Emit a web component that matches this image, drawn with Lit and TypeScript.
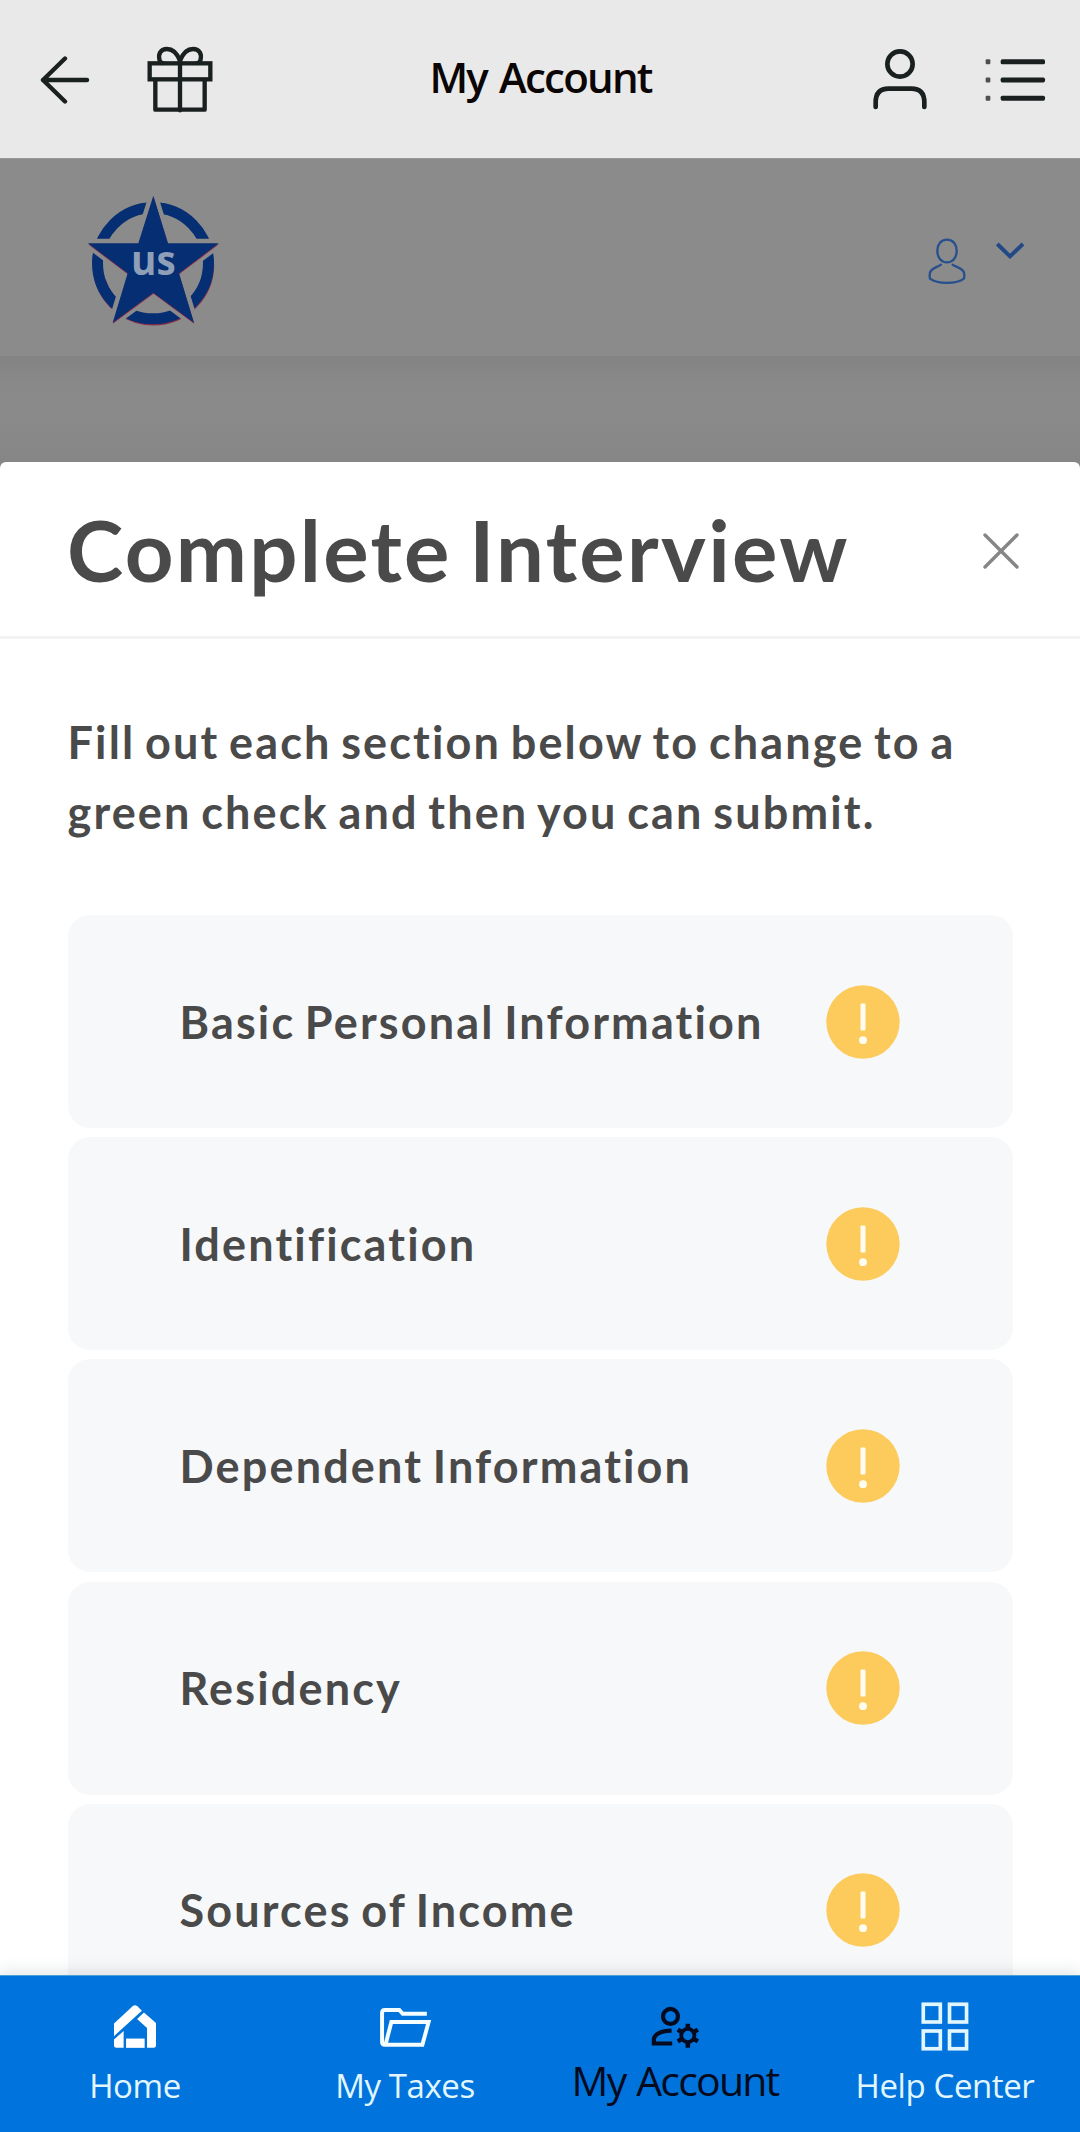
import { LitElement, html, css, svg } from "lit";
import { customElement } from "lit/decorators.js";

const sections = [
  "Basic Personal Information",
  "Identification",
  "Dependent Information",
  "Residency",
  "Sources of Income",
];

const STAR =
  "280,77 324,220 476,220 357,310 402,458 280,368 158,458 203,310 84,220 235,220";

const icons = {
  home: svg`<svg width="42" height="43" viewBox="331 134 122 124" fill="#fff">
    <path d="M331 187 L385 137 Q392 132 399 137 L412 150 L331 224 Z"/>
    <path d="M418 155 L453 186 V251 Q453 258 446 258 H427 V200 L398 174 Z"/>
    <path d="M331 234 L359 209 V258 H338 Q331 258 331 251 Z"/>
    <rect x="366" y="231" width="54" height="27"/>
  </svg>`,
  taxes: svg`<svg width="51" height="40" viewBox="1106 137 148 115" fill="none" stroke="#f4fdff" stroke-width="11.500">
    <path d="M1242 156 H1172 L1162 145 H1120 Q1112 145 1112 153 V238 Q1112 246 1120 246 H1229 L1247 180 H1139 L1122 246"/>
  </svg>`,
  account: svg`<svg width="48" height="42" viewBox="322 138 138 121" fill="none" stroke="#050a1e">
    <circle cx="378" cy="168" r="21.5" stroke-width="12"/>
    <path d="M381 209 C352 209 330 219 330 236 V246 H383" stroke-width="12"/>
    <circle cx="428" cy="223" r="19" stroke-width="11"/>
    <path d="M428 207 V189 M428 239 V258 M414 215 L399 206 M442 231 L457 240 M442 215 L457 206 M414 231 L399 240" stroke-width="13"/>
  </svg>`,
  help: svg`<svg width="48" height="49" viewBox="1107 125 138 141" fill="none" stroke="#e2f6ff" stroke-width="10.500">
    <rect x="1113.500" y="131.500" width="49" height="51"/><rect x="1189" y="131.500" width="49" height="51"/>
    <rect x="1113.500" y="208.500" width="49" height="51"/><rect x="1189" y="208.500" width="49" height="51"/>
  </svg>`,
};

@customElement("app-root")
export class AppRoot extends LitElement {
  static styles = css`
    :host {
      display: flex;
      flex-direction: column;
      width: 1080px;
      height: 2132px;
      overflow: hidden;
      background: #8a8a8a;
      color: #4a4a4a;
      font-family: "Lato", sans-serif;
    }
    svg { display: block; flex: none; }
    .topbar {
      flex: none;
      box-sizing: border-box;
      height: 158px;
      display: grid;
      grid-template-columns: 1fr auto 1fr;
      align-items: center;
      padding: 0 34px 0 39px;
      background: #e9e9e9;
    }
    .group { display: flex; align-items: center; gap: 57px; padding-top: 1px; }
    .group.end { justify-content: flex-end; }
    .screen {
      font: 600 42px/60px "Open Sans", sans-serif;
      letter-spacing: -1.8px;
      word-spacing: 3px;
      color: #0b0505;
      white-space: nowrap;
      margin: -4px 4px 0 0;
    }
    .site {
      flex: none;
      box-sizing: border-box;
      height: 198px;
      display: flex;
      justify-content: space-between;
      align-items: flex-start;
      padding: 36px 56px 0 87px;
      border-top: 1px solid #9a9a9a;
      background: #8b8b8b;
    }
    .user { display: flex; align-items: flex-start; gap: 30px; padding-top: 43px; }
    .chev { margin-top: 4px; }
    .dim {
      flex: none;
      height: 106px;
      background: linear-gradient(#838383, #898989 26px, #8a8a8a 60px, #868686);
    }
    .modal {
      flex: 1;
      min-height: 0;
      overflow: hidden;
      background: #fff;
      border-radius: 6px 6px 0 0;
    }
    .head {
      box-sizing: border-box;
      height: 177px;
      display: flex;
      align-items: center;
      justify-content: space-between;
      padding: 0 61px 0 67px;
      border-bottom: 3px solid #f2f3f3;
    }
    .close { margin-top: 3px; }
    h1 {
      margin: 0;
      font-size: 85px;
      line-height: 100px;
      font-weight: 700;
      letter-spacing: 2.3px;
      word-spacing: -5.5px;
      white-space: nowrap;
    }
    .body { padding: 68px 67.5px 0; }
    .lead {
      margin: 0;
      font-size: 45px;
      line-height: 70px;
      font-weight: 700;
      letter-spacing: 2.14px;
      word-spacing: -3.4px;
      white-space: nowrap;
    }
    .list {
      display: flex;
      flex-direction: column;
      gap: 9.2px;
      margin-top: 68px;
    }
    .card {
      flex: none;
      box-sizing: border-box;
      height: 213px;
      display: flex;
      align-items: center;
      justify-content: space-between;
      padding: 0 112.5px 0 112px;
      border-radius: 22px;
      background: #f7f8fa;
      font-size: 45px;
      line-height: 60px;
      font-weight: 700;
      letter-spacing: 2.15px;
      word-spacing: -3.5px;
      white-space: nowrap;
    }
    .nav {
      flex: none;
      box-sizing: border-box;
      height: 157px;
      display: grid;
      grid-template-columns: repeat(4, 1fr);
      background: #0074dc;
      border-top: 1px solid #4a9fd4;
      box-shadow: 0 -4px 14px rgba(60, 80, 90, 0.14);
      font: 400 33px/40px "Open Sans", sans-serif;
      color: #e2f6ff;
      position: relative;
    }
    .tab { display: flex; flex-direction: column; align-items: center; white-space: nowrap; }
    .glyph {
      flex: none;
      box-sizing: border-box;
      height: 99px;
      display: flex;
      align-items: center;
      padding: 23.5px 0 21.5px;
    }
    .label { line-height: 40px; margin-top: -9px; letter-spacing: -0.4px; }
    .active .label {
      font-size: 41px;
      color: #050a1e;
      letter-spacing: -1.8px;
      word-spacing: 2px;
      margin-top: -15px;
    }
  `;

  render() {
    return html`
      <header class="topbar">
        <div class="group">
          <svg width="51" height="48" viewBox="0 0 51 48" fill="none" stroke="#1a2020" stroke-width="4.400" stroke-linecap="round" stroke-linejoin="round">
            <path d="M26 2.500 L4 24 L26 45.500 M4 24 H48"/>
          </svg>
          <svg width="66" height="67" viewBox="441 139 198 201" fill="none" stroke="#1a2020" stroke-width="13" stroke-linejoin="round" stroke-linecap="round">
            <rect x="449" y="191" width="182" height="48" stroke-linejoin="miter"/>
            <path d="M466 241 V330 H614 V241 M540 178 V332"/>
            <path d="M540 183 C532 163 518 148 501 148 C482 148 475 162 478 178 Q479 190 488 190 M540 183 C548 163 562 148 579 148 C598 148 605 162 602 178 Q601 190 592 190"/>
          </svg>
        </div>
        <div class="screen">My Account</div>
        <div class="group end">
          <svg width="56" height="61" viewBox="96 88 168 183" fill="none" stroke="#1a2020" stroke-width="14" stroke-linecap="round">
            <circle cx="180" cy="133" r="38"/>
            <path d="M107 262 V248 Q107 207 146 207 H214 Q253 207 253 248 V262"/>
          </svg>
          <svg width="61" height="44" viewBox="435 113 183 132" fill="#1a2020">
            <rect x="482" y="117" width="133" height="15" rx="5"/><rect x="482" y="171.500" width="133" height="15" rx="5"/><rect x="482" y="226" width="133" height="15" rx="5"/>
            <g fill="#4c5050"><rect x="437" y="117" width="14" height="15" rx="3"/><rect x="437" y="171.500" width="14" height="15" rx="3"/><rect x="437" y="226" width="14" height="15" rx="3"/></g>
          </svg>
        </div>
      </header>

      <div class="site">
        <svg width="133" height="133" viewBox="81 75 399 399">
          <circle cx="280" cy="284" r="166" fill="none" stroke="#8a2f4a" stroke-width="33" stroke-dasharray="470 573"/>
          <circle cx="279" cy="280" r="166.500" fill="none" stroke="#062e73" stroke-width="33"/>
          <polygon points=${STAR} fill="none" stroke="#8b8b8b" stroke-width="27" stroke-miterlimit="10"/>
          <polygon points=${STAR} fill="#8a2f4a" transform="translate(0.500 3)"/>
          <polygon points=${STAR} fill="#062e73"/>
          <text x="280" y="314" text-anchor="middle" font-family="Open Sans, sans-serif" font-weight="700" font-size="124" textLength="134" lengthAdjust="spacingAndGlyphs" fill="#8f9fb8">us</text>
        </svg>
        <div class="user">
          <svg width="38" height="47" viewBox="142 85 114 141" fill="none" stroke="#28508f" stroke-width="7" stroke-linecap="round">
            <path d="M199 90 C218 90 228 105 228 123 C228 145 216 158 199 158 C182 158 170 145 170 123 C170 105 180 90 199 90 Z"/>
            <path d="M181 165 C170 173 152 175 148 189 Q146 198 148 207 C170 224 228 224 250 207 Q252 198 250 189 C246 175 228 173 216 165"/>
          </svg>
          <svg class="chev" width="28" height="18" viewBox="347 96 84 54" fill="none" stroke="#234886" stroke-width="12">
            <path d="M351 102 L389 139 L428 102"/>
          </svg>
        </div>
      </div>
      <div class="dim"></div>

      <main class="modal">
        <div class="head">
          <h1>Complete Interview</h1>
          <svg class="close" width="36" height="36" viewBox="0 0 36 36" stroke="#868686" stroke-width="3.400" stroke-linecap="round">
            <path d="M2 2 L34 34 M34 2 L2 34"/>
          </svg>
        </div>
        <div class="body">
          <p class="lead">Fill out each section below to change to a<br />green check and then you can submit.</p>
          <div class="list">
            ${sections.map(
              (name) => html`<div class="card">
                <span>${name}</span>
                <svg width="74" height="74" viewBox="0 0 74 74">
                  <circle cx="37" cy="37" r="36.700" fill="#fccb5c"/>
                  <rect x="34.500" y="18.500" width="5" height="27" rx="1" fill="#fffdf2"/>
                  <circle cx="37" cy="55.200" r="3.900" fill="#fffdf2"/>
                </svg>
              </div>`
            )}
          </div>
        </div>
      </main>

      <nav class="nav">
        <div class="tab"><div class="glyph">${icons.home}</div><div class="label">Home</div></div>
        <div class="tab"><div class="glyph">${icons.taxes}</div><div class="label">My Taxes</div></div>
        <div class="tab active"><div class="glyph">${icons.account}</div><div class="label">My Account</div></div>
        <div class="tab"><div class="glyph">${icons.help}</div><div class="label">Help Center</div></div>
      </nav>
    `;
  }
}
